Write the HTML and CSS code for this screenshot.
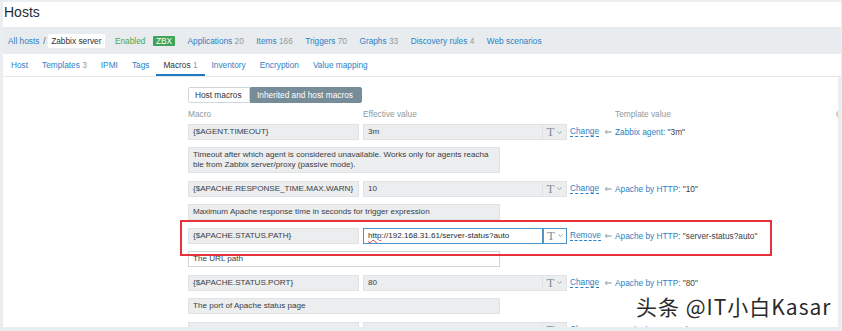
FILE: index.html
```html
<!DOCTYPE html>
<html>
<head>
  <meta charset="UTF-8" />
  <title>Hosts</title>
  <link rel="stylesheet" href="styles.css">
</head>
<body>
  <div class="page">
    <div class="title">Hosts</div>

    <div class="crumbs">
      <a class="link first">All hosts</a>
      <span class="sep">/</span>
      <span class="current">Zabbix server</span>
      <span class="status">Enabled</span>
      <span class="badge">ZBX</span>
      <a class="link item">Applications <span class="count">20</span></a>
      <a class="link item">Items <span class="count">166</span></a>
      <a class="link item">Triggers <span class="count">70</span></a>
      <a class="link item">Graphs <span class="count">33</span></a>
      <a class="link item">Discovery rules <span class="count">4</span></a>
      <a class="link item">Web scenarios</a>
    </div>

    <div class="tabs">
      <a class="tab">Host</a>
      <a class="tab">Templates <span class="count">3</span></a>
      <a class="tab">IPMI</a>
      <a class="tab">Tags</a>
      <a class="tab active">Macros <span class="count">1</span></a>
      <a class="tab">Inventory</a>
      <a class="tab">Encryption</a>
      <a class="tab">Value mapping</a>
    </div>

    <div class="content">
      <div class="switch">
        <span class="opt">Host macros</span>
        <span class="opt on">Inherited and host macros</span>
      </div>

      <div class="grid head">
        <span>Macro</span>
        <span>Effective value</span>
        <span>Template value</span>
        <span>Global value</span>
      </div>

      <div class="grid row">
        <div class="field macro">{$AGENT.TIMEOUT}</div>
        <div class="cell">
          <div class="field value">3m</div>
          <div class="tbtn"><span class="tglyph">T</span><svg width="5" height="3" viewBox="0 0 5 3"><polyline points="0.5,0.5 2.5,2.5 4.5,0.5" fill="none" stroke="#8a979e" stroke-width="0.9"/></svg></div>
          <a class="action">Change</a>
          <span class="arrow">&lArr;</span>
        </div>
        <div class="tpl"><a class="link">Zabbix agent:</a> "3m"</div>
        <div></div>
      </div>
      <div class="desc">Timeout after which agent is considered unavailable. Works only for agents reacha<br>ble from Zabbix server/proxy (passive mode).</div>

      <div class="grid row">
        <div class="field macro">{$APACHE.RESPONSE_TIME.MAX.WARN}</div>
        <div class="cell">
          <div class="field value">10</div>
          <div class="tbtn"><span class="tglyph">T</span><svg width="5" height="3" viewBox="0 0 5 3"><polyline points="0.5,0.5 2.5,2.5 4.5,0.5" fill="none" stroke="#8a979e" stroke-width="0.9"/></svg></div>
          <a class="action">Change</a>
          <span class="arrow">&lArr;</span>
        </div>
        <div class="tpl"><a class="link">Apache by HTTP:</a> "10"</div>
        <div></div>
      </div>
      <div class="desc">Maximum Apache response time in seconds for trigger expression</div>

      <div class="grid row marked">
        <div class="field macro">{$APACHE.STATUS.PATH}</div>
        <div class="cell">
          <div class="field value edit"><span class="typo">http</span>://192.168.31.61/server-status?auto</div>
          <div class="tbtn edit"><span class="tglyph">T</span><svg width="5" height="3" viewBox="0 0 5 3"><polyline points="0.5,0.5 2.5,2.5 4.5,0.5" fill="none" stroke="#8a979e" stroke-width="0.9"/></svg></div>
          <a class="action">Remove</a>
          <span class="arrow">&lArr;</span>
        </div>
        <div class="tpl"><a class="link">Apache by HTTP:</a> "server-status?auto"</div>
        <div></div>
        <div class="mark"></div>
      </div>
      <div class="desc edit">The URL path</div>

      <div class="grid row">
        <div class="field macro">{$APACHE.STATUS.PORT}</div>
        <div class="cell">
          <div class="field value">80</div>
          <div class="tbtn"><span class="tglyph">T</span><svg width="5" height="3" viewBox="0 0 5 3"><polyline points="0.5,0.5 2.5,2.5 4.5,0.5" fill="none" stroke="#8a979e" stroke-width="0.9"/></svg></div>
          <a class="action">Change</a>
          <span class="arrow">&lArr;</span>
        </div>
        <div class="tpl"><a class="link">Apache by HTTP:</a> "80"</div>
        <div></div>
      </div>
      <div class="desc">The port of Apache status page</div>

      <div class="grid row">
        <div class="field macro">{$APACHE.STATUS.SCHEME}</div>
        <div class="cell">
          <div class="field value">http</div>
          <div class="tbtn"><span class="tglyph">T</span><svg width="5" height="3" viewBox="0 0 5 3"><polyline points="0.5,0.5 2.5,2.5 4.5,0.5" fill="none" stroke="#8a979e" stroke-width="0.9"/></svg></div>
          <a class="action">Change</a>
          <span class="arrow">&lArr;</span>
        </div>
        <div class="tpl"><a class="link">Apache by HTTP:</a> "http"</div>
        <div></div>
      </div>
    </div>

    <div class="watermark">头条 @IT小白Kasar</div>
  </div>
</body>
</html>
```

FILE: styles.css
```css
body {
  margin: 0;
  background: #ebeef0;
  font-family: "Liberation Sans", Arial, sans-serif;
  font-size: 8.3px;
  color: #2c3338;
}

.page {
  position: relative;
  height: 331px;
  padding: 2px 1px 0 3px;
  box-sizing: border-box;
  overflow: hidden;
}

.link {
  color: #2d7fc4;
}

.count {
  color: #8e9aa1;
}

/* title */
.title {
  background: white;
  height: 25px;
  line-height: 20px;
  font-size: 14px;
  padding-left: 1px;
  color: #1f2c33;
}

/* breadcrumbs */
.crumbs {
  display: flex;
  align-items: center;
  height: 27px;
  background: #e8ecef;
  padding-left: 5px;
  white-space: nowrap;
}

.sep {
  margin: 0 2px 0 4px;
  color: #4a555c;
}

.current {
  background: white;
  padding: 3px 3.5px;
  line-height: 8px;
  color: #2c3338;
}

.status {
  margin-left: 10px;
  color: #4ca64c;
}

.badge {
  margin-left: 7.5px;
  background: #3ea55a;
  color: white;
  padding: 1px 3px;
  line-height: 8px;
  border-radius: 1px;
}

.item {
  margin-left: 12.5px;
}

/* tabs */
.tabs {
  display: flex;
  height: 22px;
  background: white;
  border-bottom: 1px solid #e4e8eb;
  padding-left: 1px;
}

.tab {
  padding: 0 7px;
  line-height: 22px;
  color: #2d7fc4;
}

.tab.active {
  color: #2c3338;
  box-shadow: inset 0 -2px 0 #1f78c1;
}

/* content */
.content {
  height: 250px;
  margin-right: 3px;
  background: white;
  padding: 10px 0 0 185px;
  box-sizing: border-box;
  overflow: hidden;
  font-size: 8.1px;
}

.switch {
  display: flex;
  height: 16px;
  font-size: 8.3px;
}

.opt {
  box-sizing: border-box;
  height: 16px;
  line-height: 14px;
  border: 1px solid #cfd6db;
  padding: 0 6px;
  width: 62px;
  border-radius: 2px 0 0 2px;
  color: #2c3338;
  white-space: nowrap;
}

.opt.on {
  width: 112px;
  background: #768d99;
  border-color: #768d99;
  color: white;
  border-radius: 0 2px 2px 0;
}

.grid {
  display: grid;
  grid-template-columns: 175px 252px 221px 200px;
  align-items: center;
}

.head {
  height: 14px;
  margin: 4px 0 3px;
  color: #8e9aa1;
  white-space: nowrap;
  font-size: 8.3px;
}

.row {
  position: relative;
  height: 16px;
  margin-bottom: 7px;
  white-space: nowrap;
}

.field {
  box-sizing: border-box;
  height: 16px;
  line-height: 14px;
  border: 1px solid #dfe3e6;
  background: #ebedee;
  padding: 0 3px 0 4px;
  color: #3a4046;
  overflow: hidden;
}

.macro {
  width: 171px;
}

.cell {
  display: flex;
  align-items: center;
}

.value {
  width: 180px;
}

.value.edit {
  background: white;
  border-color: #4d94c8;
  color: #1f2c33;
}

.typo {
  text-decoration: underline wavy #e0383e;
  text-decoration-thickness: 1px;
}

.tbtn {
  box-sizing: border-box;
  width: 24px;
  height: 16px;
  border: 1px solid #dfe3e6;
  border-left: none;
  background: #ebedee;
  display: flex;
  align-items: center;
  justify-content: center;
  gap: 3px;
}

.tbtn.edit {
  background: white;
  border-color: #4d94c8;
  border-left: 1px solid #4d94c8;
}

.tglyph {
  font-family: "Liberation Serif", "Times New Roman", serif;
  font-size: 13px;
  line-height: 12px;
  color: #808e96;
}

.action {
  margin-left: 3px;
  color: #2d7fc4;
  line-height: 9px;
  font-size: 8.3px;
  border-bottom: 1px dashed #2d7fc4;
}

.arrow {
  margin-left: auto;
  margin-right: 3px;
  font-family: "DejaVu Sans", sans-serif;
  font-size: 9px;
  color: #8e9aa1;
}

.tpl {
  color: #3a4046;
  font-size: 8.3px;
}

.mark {
  position: absolute;
  top: -8px;
  left: -8px;
  width: 592px;
  height: 36px;
  box-sizing: border-box;
  border: 2px solid #e5323b;
}

.desc {
  box-sizing: border-box;
  width: 312px;
  border: 1px solid #dfe3e6;
  background: #ebedee;
  padding: 2.25px 4px;
  line-height: 9.5px;
  color: #3a4046;
  margin-bottom: 8px;
  white-space: nowrap;
  overflow: hidden;
}

.desc.edit {
  background: white;
  border-color: #cfd6db;
}

/* watermark over the page */
.watermark {
  position: absolute;
  left: 636px;
  top: 291px;
  font-family: "Noto Sans CJK SC", sans-serif;
  font-size: 21px;
  letter-spacing: 1px;
  color: #2a2a2a;
  white-space: nowrap;
  text-shadow: 0 0 2px #fff, 1px 1px 1px #fff, -1px -1px 1px #fff;
}
```
